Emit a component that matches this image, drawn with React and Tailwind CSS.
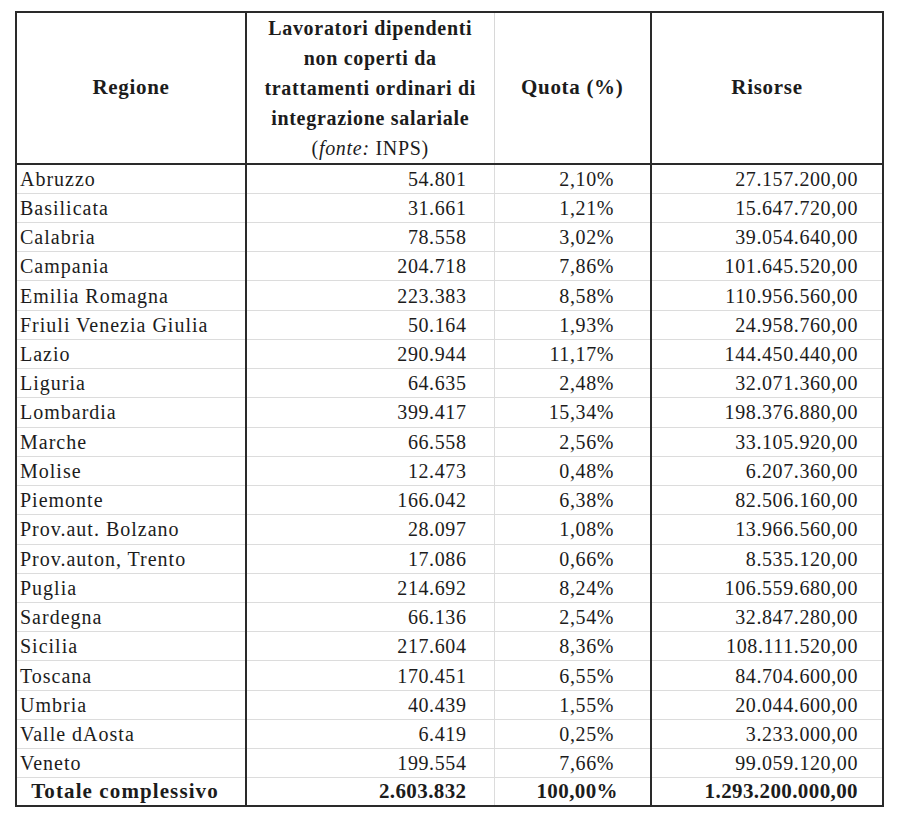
const rows = [
  ['Abruzzo', '54.801', '2,10%', '27.157.200,00'],
  ['Basilicata', '31.661', '1,21%', '15.647.720,00'],
  ['Calabria', '78.558', '3,02%', '39.054.640,00'],
  ['Campania', '204.718', '7,86%', '101.645.520,00'],
  ['Emilia Romagna', '223.383', '8,58%', '110.956.560,00'],
  ['Friuli Venezia Giulia', '50.164', '1,93%', '24.958.760,00'],
  ['Lazio', '290.944', '11,17%', '144.450.440,00'],
  ['Liguria', '64.635', '2,48%', '32.071.360,00'],
  ['Lombardia', '399.417', '15,34%', '198.376.880,00'],
  ['Marche', '66.558', '2,56%', '33.105.920,00'],
  ['Molise', '12.473', '0,48%', '6.207.360,00'],
  ['Piemonte', '166.042', '6,38%', '82.506.160,00'],
  ['Prov.aut. Bolzano', '28.097', '1,08%', '13.966.560,00'],
  ['Prov.auton, Trento', '17.086', '0,66%', '8.535.120,00'],
  ['Puglia', '214.692', '8,24%', '106.559.680,00'],
  ['Sardegna', '66.136', '2,54%', '32.847.280,00'],
  ['Sicilia', '217.604', '8,36%', '108.111.520,00'],
  ['Toscana', '170.451', '6,55%', '84.704.600,00'],
  ['Umbria', '40.439', '1,55%', '20.044.600,00'],
  ['Valle dAosta', '6.419', '0,25%', '3.233.000,00'],
  ['Veneto', '199.554', '7,66%', '99.059.120,00'],
]

export default function App() {
  return (
    <div className="min-h-[819px] bg-white pt-[11px] pl-[15px] text-[#1c1c1c] font-['Liberation_Serif',serif]">
      <table className="w-[867px] table-fixed border-collapse border-2 border-[#2a2a2a] text-[20px]">
        <colgroup>
          <col className="w-[230px]" />
          <col className="w-[248px]" />
          <col className="w-[157px]" />
          <col className="w-[232px]" />
        </colgroup>
        <thead>
          <tr className="h-[151px] border-b-2 border-[#2a2a2a] text-[20px] tracking-[0.7px]">
            <th className="border-r-2 border-[#2a2a2a] font-bold text-center align-middle text-[21px]">Regione</th>
            <th className="border-r border-[#d8d8d8] font-bold text-center align-middle leading-[30px] whitespace-nowrap">
              Lavoratori dipendenti
              <br />
              non coperti da
              <br />
              trattamenti ordinari di
              <br />
              integrazione salariale
              <br />
              <span className="font-normal">(<i>fonte:</i> INPS)</span>
            </th>
            <th className="border-r-2 border-[#2a2a2a] font-bold text-center align-middle text-[21px]">Quota (%)</th>
            <th className="font-bold text-center align-middle text-[21px]">Risorse</th>
          </tr>
        </thead>
        <tbody>
          {rows.map((r) => (
            <tr key={r[0]} className="h-[29.24px] border-b border-[#dcdcdc] last:border-b-2 last:border-[#2a2a2a]">
              <td className="border-r-2 border-[#2a2a2a] pl-[3px] leading-none whitespace-nowrap tracking-[1px]">{r[0]}</td>
              <td className="border-r border-[#dcdcdc] pr-[27px] text-right leading-none tracking-[0.6px]">{r[1]}</td>
              <td className="border-r-2 border-[#2a2a2a] text-right leading-none pr-[36px] tracking-[0.6px]">{r[2]}</td>
              <td className="pr-[24px] text-right leading-none tracking-[0.6px]">{r[3]}</td>
            </tr>
          ))}
          <tr className="h-[28px] font-bold text-[21px]">
            <td className="border-r-2 border-[#2a2a2a] text-center leading-none pr-[12px] tracking-[1.1px] whitespace-nowrap">Totale complessivo</td>
            <td className="border-r border-[#dcdcdc] pr-[27px] text-right leading-none tracking-[0.4px]">2.603.832</td>
            <td className="border-r-2 border-[#2a2a2a] text-right leading-none pr-[32px] tracking-[0.4px]">100,00%</td>
            <td className="pr-[24px] text-right leading-none tracking-[0.4px]">1.293.200.000,00</td>
          </tr>
        </tbody>
      </table>
    </div>
  )
}
